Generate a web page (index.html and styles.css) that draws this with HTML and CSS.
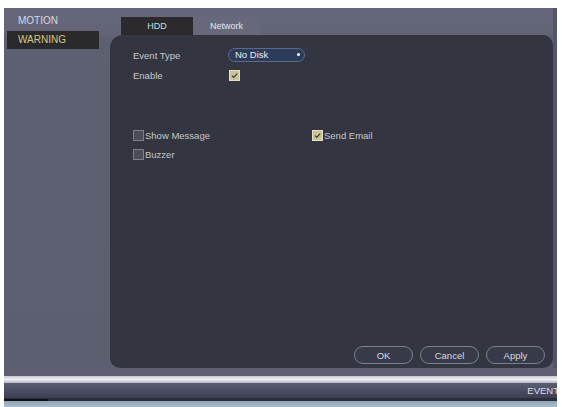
FILE: index.html
```html
<!DOCTYPE html>
<html>
<head>
<meta charset="utf-8">
<link rel="stylesheet" href="styles.css">
</head>
<body>
<div class="screen">
  <div class="main">
    <div class="sidebar">
      <div class="nav-item">MOTION</div>
      <div class="nav-item active">WARNING</div>
    </div>
    <div class="content">
      <div class="tabs">
        <div class="tab active">HDD</div>
        <div class="tab">Network</div>
      </div>
      <div class="panel">
        <div class="row">
          <span class="label">Event Type</span>
          <div class="select">No Disk<span class="dot"></span></div>
        </div>
        <div class="row">
          <span class="label">Enable</span>
          <span class="check on"><svg viewBox="0 0 12 12"><path d="M2.5 6.2 L5 8.6 L9.6 3.4" fill="none" stroke="#3c3a30" stroke-width="1.6"/></svg></span>
        </div>
        <div class="options">
          <label class="opt"><span class="check off"></span>Show Message</label>
          <label class="opt"><span class="check on"><svg viewBox="0 0 12 12"><path d="M2.5 6.2 L5 8.6 L9.6 3.4" fill="none" stroke="#3c3a30" stroke-width="1.6"/></svg></span>Send Email</label>
          <label class="opt"><span class="check off"></span>Buzzer</label>
        </div>
        <div class="spacer"></div>
        <div class="buttons">
          <button class="btn">OK</button>
          <button class="btn">Cancel</button>
          <button class="btn">Apply</button>
        </div>
      </div>
    </div>
    <div class="edge"></div>
  </div>
  <div class="stripe"></div>
  <div class="bottombar"><span class="event">EVENT</span></div>
  <div class="baseline"><span class="blackline"></span></div>
</div>
</body>
</html>
```

FILE: styles.css
```css
html, body {
  margin: 0;
  padding: 0;
  background: #ffffff;
}
body {
  font-family: "Liberation Sans", Arial, sans-serif;
  font-size: 9.5px;
  color: #c9cbd3;
}
.screen {
  margin: 8px 5px 0 4px;
  width: 553px;
  height: 399px;
  background: #5e6072;
  display: flex;
  flex-direction: column;
}
.main {
  display: flex;
  height: 360px;
  background: linear-gradient(#66677b 0, #626476 27px, #5d6071 28px, #5c5f70 100%);
}
.sidebar {
  width: 106px;
  padding-top: 4px;
  display: flex;
  flex-direction: column;
  gap: 1px;
}
.nav-item {
  margin-left: 3px;
  width: 81px;
  height: 18px;
  line-height: 18px;
  padding-left: 11px;
  font-size: 10px;
  color: #d6d8e2;
}
.nav-item.active {
  background: #2a2a2d;
  color: #d8c97e;
}
.content {
  flex: 1;
  display: flex;
  flex-direction: column;
}
.tabs {
  display: flex;
  padding: 9px 0 0 11px;
  height: 18px;
}
.tab {
  height: 18px;
  line-height: 18px;
  text-align: center;
  font-size: 9px;
  color: #e4e6ee;
}
.tab:first-child {
  width: 72px;
}
.tab:last-child {
  width: 67px;
  background: #67687b;
}
.tab.active {
  background: #2d2a2e;
  color: #bfe0e0;
}
.panel {
  height: 333px;
  background: #333640;
  border-radius: 13px 10px 10px 10px;
  display: flex;
  flex-direction: column;
  padding: 13px 8px 4px 23px;
  box-sizing: border-box;
}
.edge {
  width: 4px;
  background: #53566a;
}
.row {
  display: flex;
  align-items: center;
  height: 14px;
  margin-bottom: 6px;
}
.label {
  width: 95px;
  color: #c6c8d0;
}
.select {
  width: 77px;
  height: 14px;
  box-sizing: border-box;
  border: 1px solid #5c6a88;
  border-radius: 7px;
  background: #2e3c5c;
  color: #e8ecf4;
  padding-left: 6px;
  line-height: 12px;
  position: relative;
}
.dot {
  position: absolute;
  right: 4px;
  top: 4px;
  width: 3px;
  height: 3px;
  border-radius: 50%;
  background: #f2f4ff;
}
.check {
  width: 11px;
  height: 11px;
  box-sizing: border-box;
  display: inline-block;
  flex: none;
}
.check svg {
  display: block;
  width: 100%;
  height: 100%;
}
.check.on {
  background: #c8c39a;
  border: 1px solid #e4e0c0;
}
.check.off {
  background: #4a4c56;
  border: 1px solid #7c7e88;
}
.row .check {
  margin-left: 1px;
  margin-top: 1px;
}
.options {
  display: grid;
  grid-template-columns: 179px 1fr;
  row-gap: 8px;
  margin-top: 42px;
}
.opt {
  display: flex;
  align-items: center;
  gap: 1px;
  height: 11px;
  color: #c4c6ce;
}
.spacer {
  flex: 1;
}
.buttons {
  display: flex;
  justify-content: flex-end;
  gap: 7px;
  margin-bottom: 0;
}
.btn {
  width: 59px;
  height: 18px;
  border: 1px solid #7c7f8c;
  border-radius: 9px;
  background: #373a48;
  color: #d8dae2;
  font-family: "Liberation Sans", Arial, sans-serif;
  font-size: 9.5px;
  padding: 0;
}
.stripe {
  margin-top: 8px;
  height: 7px;
  background: linear-gradient(#c8c9d4, #eeeef4 50%, #b4b6c4);
}
.bottombar {
  height: 15px;
  background: linear-gradient(#5b5d72, #3c3f52);
  display: flex;
  justify-content: flex-end;
  align-items: center;
}
.event {
  color: #dcdde6;
  font-size: 9.5px;
  margin-right: -2px;
}
.baseline {
  flex: 1;
  background: linear-gradient(#2a2d3c 0, #2a2d3c 3px, #8fa6b6 3px, #a8bccb 100%);
  position: relative;
}
.blackline {
  position: absolute;
  left: 0;
  top: 1px;
  width: 44px;
  height: 2px;
  background: #101015;
}
```
